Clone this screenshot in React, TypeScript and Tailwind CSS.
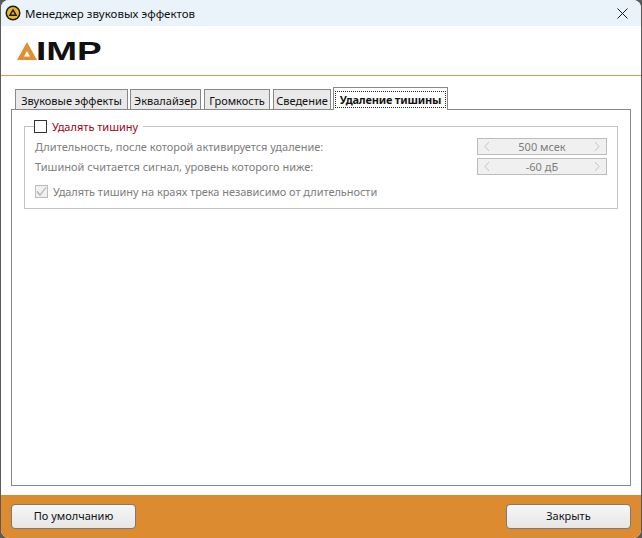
export default function App() {
  const tabs = [
    { label: "Звуковые эффекты", cls: "w-[113px]" },
    { label: "Эквалайзер", cls: "w-[71px] ml-[2px]" },
    { label: "Громкость", cls: "w-[66px] ml-[3px]" },
    { label: "Сведение", cls: "w-[58px] ml-[3px]" },
  ];
  const Spin = ({ value }: { value: string }) => (
    <div className="w-[130px] h-[17px] bg-[#f0f0f0] border border-[#bcbcbc] flex items-center justify-between text-[#7d7d7d] text-[11px]">
      <svg width="22" height="15" viewBox="0 0 22 15" fill="none" stroke="#c4c4c4"><path d="M11 3 L7 7.5 L11 12" /></svg>
      <span className="leading-none">{value}</span>
      <svg width="22" height="15" viewBox="0 0 22 15" fill="none" stroke="#c4c4c4"><path d="M11 3 L15 7.5 L11 12" /></svg>
    </div>
  );
  const Btn = ({ label }: { label: string }) => (
    <button className="w-[125px] h-[25px] rounded-[4px] border border-[#7a7a7a] bg-gradient-to-b from-[#f6f6f6] to-[#e6e6e6] text-[11px] text-[#111]">{label}</button>
  );
  return (
    <div className="w-[642px] h-[538px] bg-[#5a5a5a] overflow-hidden font-['Noto_Sans','Open_Sans',sans-serif]">
      <div className="ml-px w-[640px] h-[538px] rounded-[8px] overflow-hidden bg-white flex flex-col">
        <div className="h-[26px] bg-[#eaf3fa] flex items-center shrink-0">
          <svg className="ml-[4px]" width="16" height="16" viewBox="0 0 16 16">
            <circle cx="8" cy="8" r="7.5" fill="#1c1c1c" />
            <circle cx="8" cy="8" r="6" fill="#f0b323" />
            <path d="M8 3.6 L12.4 11 L3.6 11 Z M8 6.4 L6.2 9.5 L9.8 9.5 Z" fill="#1c1c1c" fillRule="evenodd" />
          </svg>
          <span className="ml-[4px] mt-[2px] text-[11.5px] text-[#111] leading-none">Менеджер звуковых эффектов</span>
          <svg className="ml-auto mr-[13px] mt-px" width="11" height="11" viewBox="0 0 11 11" stroke="#1a1a1a" strokeWidth="1"><path d="M0.5 0.5 L10.5 10.5 M10.5 0.5 L0.5 10.5" /></svg>
        </div>
        <div className="h-[50px] border-b border-[#e09a4e] flex items-center pl-[16px] shrink-0">
          <svg width="20" height="18" viewBox="0 0 20 18" className="mt-[1px]">
            <path d="M10 0 L20 18 L0 18 Z M10 9 L7 14.5 L13 14.5 Z" fill="#e08f33" fillRule="evenodd" />
          </svg>
          <span className="ml-[-1px] mt-[1px] text-[25px] font-bold leading-none text-[#111] font-['Liberation_Sans',sans-serif] scale-x-[1.48] origin-left">IMP</span>
        </div>
        <div className="flex-1 pt-[11px] px-[10px] flex flex-col">
          <div className="flex items-end pl-[4px] h-[22px]">
            {tabs.map((t) => (
              <div key={t.label} className={`${t.cls} h-[21px] -mb-px border border-[#888] border-b-0 bg-[#e9e9e9] flex items-center justify-center text-[11px] text-[#111] leading-none`}>{t.label}</div>
            ))}
            <div className="w-[115px] ml-[2px] h-[23px] bg-white border border-[#888] border-b-0 -mb-px relative z-10 flex items-center justify-center text-[11px] font-bold text-[#111] leading-none whitespace-nowrap">
              <span className="border border-dotted border-[#222] h-[17px] flex items-center w-[111px] justify-center tracking-[-0.2px]">Удаление тишины</span>
            </div>
          </div>
          <div className="w-[620px] h-[377px] border border-[#888] bg-white px-[12px] pt-[9px]">
            <fieldset className="h-[90px] border border-[#c4c4c4] pl-[9px] pr-[10px]">
              <legend className="flex items-center h-[14px] text-[11px] text-[#a00020] pr-[5px] leading-none">
                <span className="w-[13px] h-[13px] border border-[#333] bg-white mr-[5px]" />
                Удалять тишину
              </legend>
              <div className="pl-[1px] pt-[5px] text-[11px] text-[#7d7d7d] leading-none flex flex-col">
                <div className="flex items-center justify-between h-[17px]">
                  <span>Длительность, после которой активируется удаление:</span>
                  <Spin value="500 мсек" />
                </div>
                <div className="flex items-center justify-between h-[17px] mt-[3px]">
                  <span>Тишиной считается сигнал, уровень которого ниже:</span>
                  <Spin value="-60 дБ" />
                </div>
                <div className="flex items-center mt-[10px] tracking-[-0.05px]">
                  <span className="w-[13px] h-[13px] border border-[#bcbcbc] bg-[#f0f0f0] mr-[5px] flex items-center justify-center">
                    <svg width="11" height="11" viewBox="0 0 11 11" fill="none" stroke="#b0b0b0" strokeWidth="1.2"><path d="M1 5.5 L4 9 L10 1.5" /></svg>
                  </span>
                  Удалять тишину на краях трека независимо от длительности
                </div>
              </div>
            </fieldset>
          </div>
        </div>
        <div className="h-[43px] bg-[#dd8b31] flex items-start justify-between pl-[10px] pr-[10px] pt-[9px] shrink-0">
          <Btn label="По умолчанию" />
          <Btn label="Закрыть" />
        </div>
      </div>
    </div>
  );
}
